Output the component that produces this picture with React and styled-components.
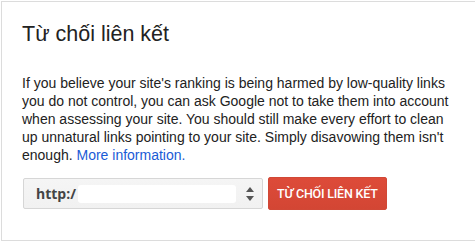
import React from "react";
import styled, { createGlobalStyle } from "styled-components";

const Global = createGlobalStyle`
  html, body { margin: 0; padding: 0; background: #fff; }
  body { font-family: Arial, "Liberation Sans", sans-serif; overflow: hidden; }
`;

const Panel = styled.section`
  margin: 1px 0 0 1px;
  width: 490px;
  height: 240px;
  box-sizing: border-box;
  border: 1px solid #dcdcdc;
  border-right: none;
  padding: 18px 0 0 20px;
  background: #fff;
`;

const Title = styled.h2`
  margin: 0;
  font-family: Arial, "Liberation Sans", sans-serif;
  font-weight: normal;
  font-size: 21.5px;
  line-height: 28px;
  color: #222;
`;

const Body = styled.p`
  margin: 26px 0 0 0;
  font-size: 14px;
  line-height: 18px;
  color: #222;
  white-space: nowrap;
`;

const Link = styled.a`
  color: #1a5bd6;
  text-decoration: none;
`;

const Row = styled.div`
  display: flex;
  align-items: center;
  gap: 5px;
  margin: 13px 0 0 1px;
`;

const Select = styled.div`
  width: 240px;
  height: 31px;
  box-sizing: border-box;
  border: 1px solid #d6d6d6;
  border-radius: 2px;
  background: linear-gradient(#f5f5f5, #f1f1f1);
  display: flex;
  align-items: center;
  padding: 0 8px 0 12px;
  position: relative;
`;

const Url = styled.span`
  font-family: "Open Sans", Arial, sans-serif;
  font-weight: 700;
  font-size: 14px;
  color: #444;
`;

const Redact = styled.span`
  flex: 1;
  height: 18px;
  margin: 0 10px 0 2px;
  background: #fff;
  border-radius: 3px;
`;

const Arrows = styled.svg`
  width: 8px;
  height: 14px;
  flex: none;
`;

const Button = styled.button`
  height: 33px;
  box-sizing: border-box;
  border: 1px solid #d14836;
  border-radius: 2px;
  background: linear-gradient(#dd4b39, #d34634);
  color: #fff;
  font-family: Roboto, "Open Sans", sans-serif;
  font-weight: 500;
  font-size: 12.5px;
  letter-spacing: -0.2px;
  text-transform: uppercase;
  padding: 0 8px;
  cursor: pointer;
`;

export default function App() {
  return (
    <>
      <Global />
      <Panel>
        <Title>Từ chối liên kết</Title>
        <Body>
          If you believe your site's ranking is being harmed by low-quality links
          <br />
          you do not control, you can ask Google not to take them into account
          <br />
          when assessing your site. You should still make every effort to clean
          <br />
          up unnatural links pointing to your site. Simply disavowing them isn't
          <br />
          enough. <Link href="#">More information.</Link>
        </Body>
        <Row>
          <Select>
            <Url>http:/</Url>
            <Redact />
            <Arrows viewBox="0 0 8 14">
              <path d="M4 0 L8 5 L0 5 Z" fill="#555" />
              <path d="M0 9 L8 9 L4 14 Z" fill="#555" />
            </Arrows>
          </Select>
          <Button>Từ chối liên kết</Button>
        </Row>
      </Panel>
    </>
  );
}
